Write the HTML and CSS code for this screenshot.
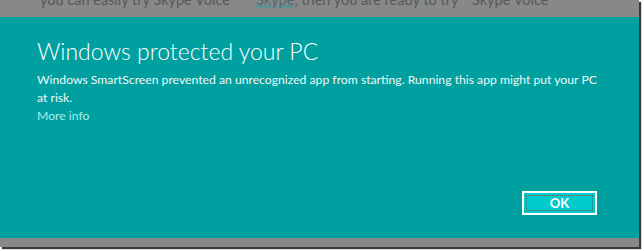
FILE: index.html
```html
<html>
    <head>
        <title>Windows protected your PC</title>
        <link rel="stylesheet" href="styles.css">
    </head>
    <body>
        <!-- Screenshot frame -->
        <div class="frame">
            <!-- page behind the dialog -->
            <div class="behind">
                <span class="col1">you can easily try Skype Voice</span>
                <span class="col2"><u>Skype</u>, then you are ready to try</span>
                <span class="col3">Skype Voice</span>
            </div>

            <!-- SmartScreen dialog -->
            <div class="dialog">
                <div class="title">Windows protected your PC</div>
                <div class="message">Windows SmartScreen prevented an unrecognized app from starting. Running this app might put your PC at risk.</div>
                <a class="more" href="#">More info</a>
                <div class="buttons">
                    <button class="ok"><span>OK</span></button>
                </div>
            </div>
        </div>
    </body>
</html>
```

FILE: styles.css
```css
body {
    margin: 0;
    background-color: white;
    font-family: Lato, 'Open Sans', sans-serif;
}

/* Frame */
.frame {
    width: 639px;
    height: 247px;
    background-color: #888888;
    box-shadow: 2px 2px 1px #3a3a3a;
    display: flex;
    flex-direction: column;
}

/* Text behind the dialog, cut at the top */
.behind {
    height: 17px;
    overflow: hidden;
    display: flex;
    align-items: flex-start;
    font-size: 14.5px;
    color: #585858;
    white-space: nowrap;
}
.behind span {
    display: block;
    line-height: 16px;
    margin-top: -8px;
}
.col1 {
    margin-left: 40px;
    width: 216px;
}
.col2 {
    width: 216px;
}
.col2 u {
    color: #4d6b6b;
    text-decoration: underline dotted #2e8a8a;
}

/* Dialog */
.dialog {
    background-color: #00a0a0;
    height: 221px;
    padding: 0 42px 0 37px;
    box-sizing: border-box;
    display: flex;
    flex-direction: column;
    color: white;
}
.title {
    margin-top: 19px;
    font-size: 23px;
    font-weight: 300;
    line-height: 30px;
}
.message {
    margin-top: 5px;
    font-size: 12.2px;
    line-height: 18px;
    color: #eef8f8;
    width: 560px;
}
.more {
    font-size: 12.2px;
    line-height: 18px;
    color: #a8ecec;
    text-decoration: none;
}
.buttons {
    margin-top: auto;
    margin-bottom: 23px;
    display: flex;
    justify-content: flex-end;
}
.ok {
    width: 75px;
    height: 24px;
    padding: 2px;
    background-color: #00cccc;
    border: 2px solid white;
    box-shadow: 0 0 0 1px #00a0a0;
    box-sizing: border-box;
    display: flex;
}
.ok span {
    flex: 1;
    border: 1px dotted #3a6a6a;
    color: white;
    font-family: Lato, sans-serif;
    font-size: 13px;
    font-weight: 700;
    line-height: 14px;
}
```
